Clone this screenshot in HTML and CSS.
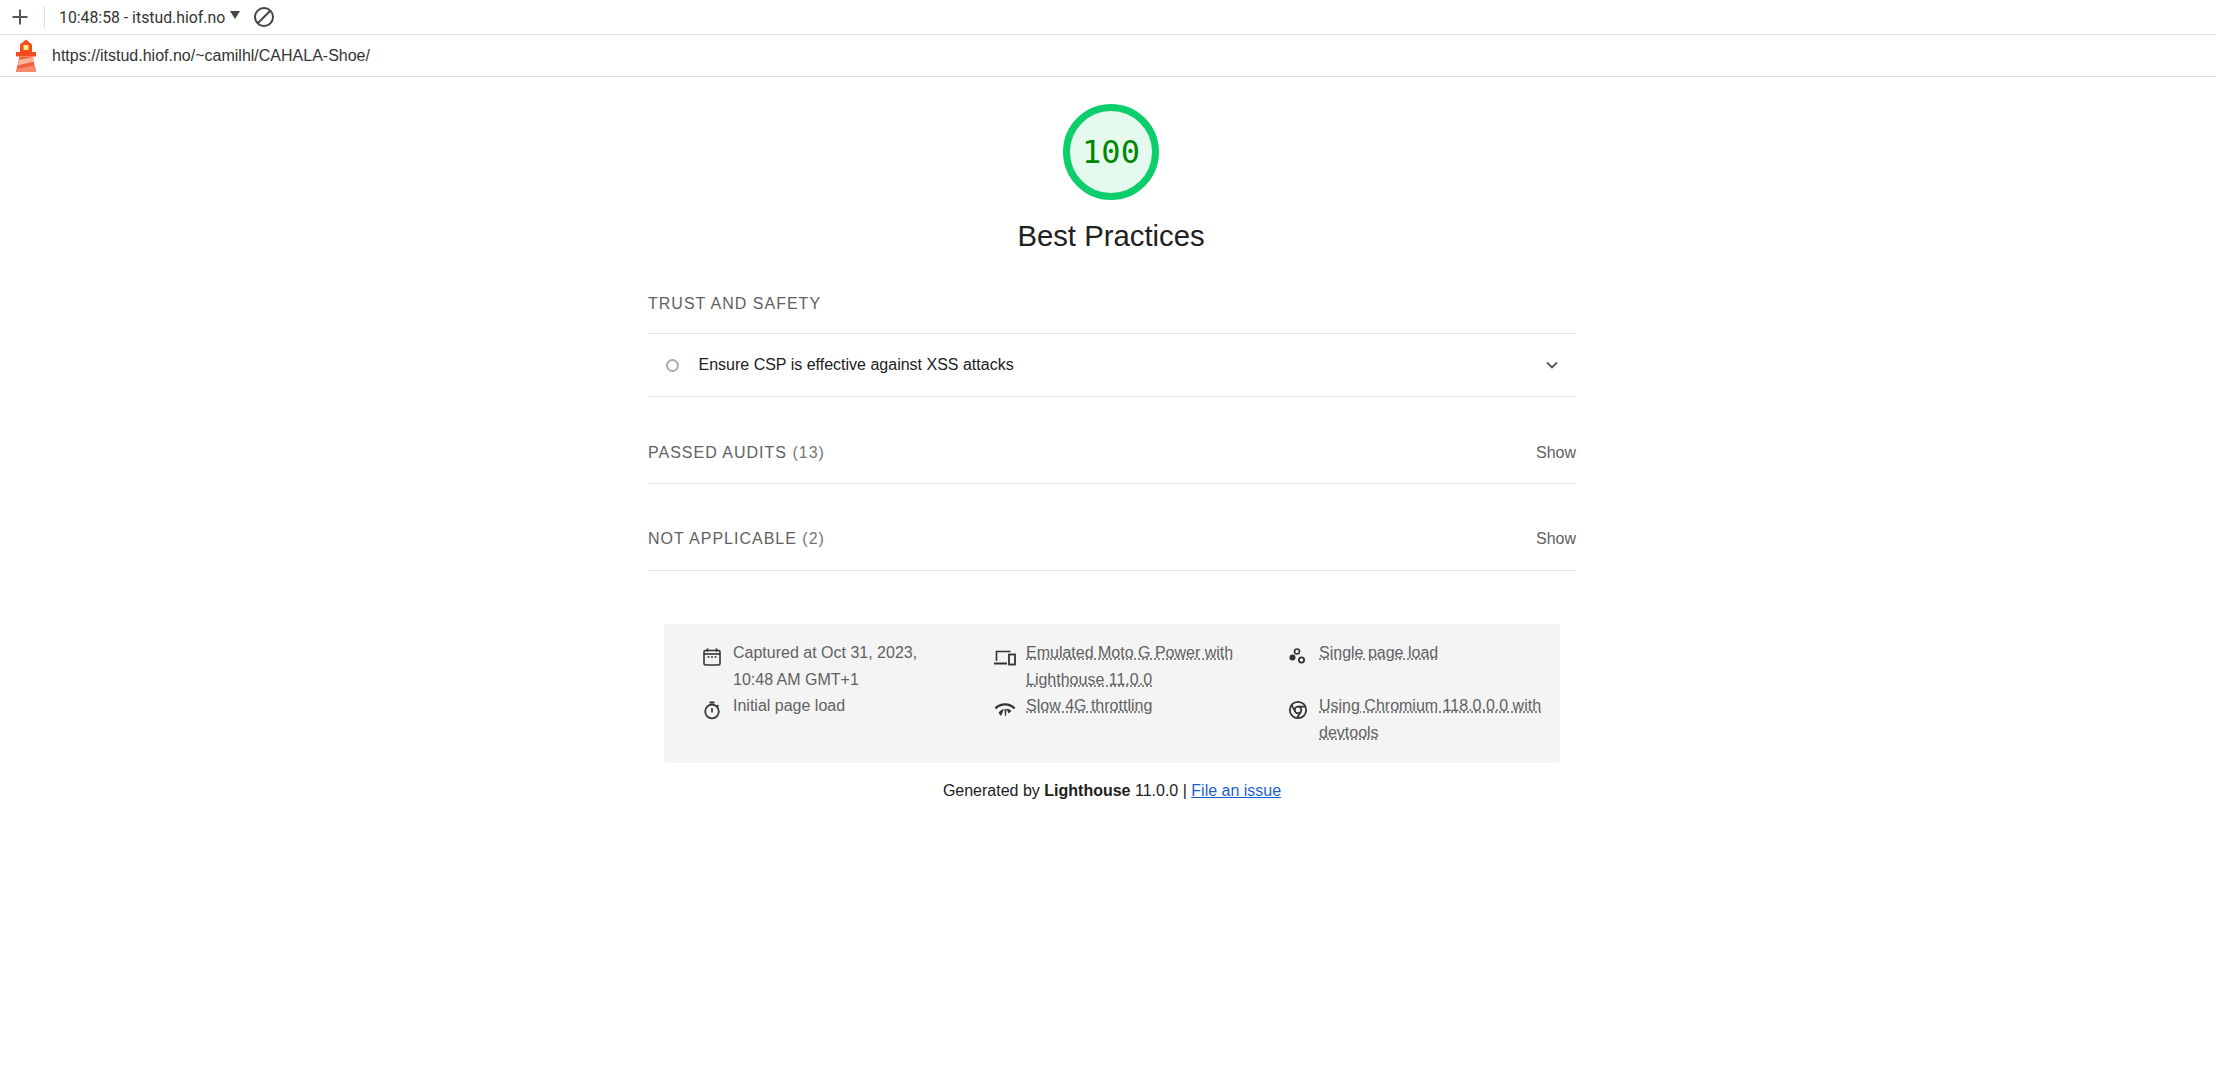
FILE: index.html
```html
<!DOCTYPE html>
<html lang="en">
<head>
  <meta charset="UTF-8">
  <title>Lighthouse report</title>
  <link rel="stylesheet" href="styles.css">
</head>
<body>
  <div class="topbar">
    <svg class="plus" width="18" height="18" viewBox="0 0 18 18"><path d="M9 1.500v15M1.500 9h15" stroke="#555" stroke-width="2" fill="none"/></svg>
    <span class="divider"></span>
    <span class="session">10:48:58 - itstud.hiof.no</span>
    <span class="caret"></span>
    <svg class="block" width="22" height="22" viewBox="0 0 22 22"><circle cx="11" cy="11" r="9" stroke="#444" stroke-width="2" fill="none"/><path d="M5 17L17 5" stroke="#444" stroke-width="2"/></svg>
  </div>
  <div class="urlbar">
    <svg class="logo" width="22" height="34" viewBox="0 0 22 34">
      <path d="M5 5.500L11 .5l6 5V13H5z" fill="#f44b21"/>
      <path d="M1 13h20v4.500H1z" fill="#f44b21"/>
      <path d="M8.500 6h5v5h-5z" fill="#fff176"/>
      <path d="M4.500 17.500h13L21 33H1z" fill="#f0603a"/>
      <path d="M3.800 21L18.300 18 19 22.500 3 26.500z" fill="#fbb39d"/>
      <path d="M1.800 30L20 26.500 21 33H1z" fill="#f88a6c"/>
    </svg>
    <span class="url">https://itstud.hiof.no/~camilhl/CAHALA-Shoe/</span>
  </div>

  <main class="report">
    <div class="gauge"><span>100</span></div>
    <h1>Best Practices</h1>

    <div class="group-title first">TRUST AND SAFETY</div>
    <div class="audit">
      <span class="dot"></span>
      <span class="audit-name">Ensure CSP is effective against XSS attacks</span>
      <svg class="chevron" width="14" height="10" viewBox="0 0 14 10"><path d="M2 2.500l5 5 5-5" stroke="#555" stroke-width="1.800" fill="none"/></svg>
    </div>

    <div class="clump">
      <span class="clump-name">PASSED AUDITS <span class="count">(13)</span></span>
      <span class="show">Show</span>
    </div>
    <div class="clump">
      <span class="clump-name">NOT APPLICABLE <span class="count">(2)</span></span>
      <span class="show">Show</span>
    </div>

    <div class="meta">
      <div class="meta-item">
        <svg width="20" height="20" viewBox="0 0 20 20"><path d="M5.500 1.500v3M14.500 1.500v3" stroke="#333" stroke-width="1.800"/><rect x="2" y="3.500" width="16" height="14.500" rx="1.500" fill="none" stroke="#333" stroke-width="1.600"/><path d="M2 7h16" stroke="#333" stroke-width="1.600"/><path d="M5.500 10h2M9 10h2M12.500 10h2" stroke="#333" stroke-width="1.400"/></svg>
        <span class="narrow">Captured at Oct 31, 2023, 10:48 AM GMT+1</span>
      </div>
      <div class="meta-item">
        <svg width="22" height="20" viewBox="0 0 22 20"><path d="M2.500 14V4.500h14" fill="none" stroke="#333" stroke-width="1.600"/><path d="M0 15.500h13v2H0z" fill="#333"/><rect x="15" y="7.500" width="6" height="10" fill="none" stroke="#333" stroke-width="1.800"/></svg>
        <span class="dotted">Emulated Moto G Power with Lighthouse 11.0.0</span>
      </div>
      <div class="meta-item">
        <svg width="20" height="20" viewBox="0 0 20 20"><circle cx="9" cy="4.500" r="2.500" fill="none" stroke="#333" stroke-width="1.600"/><circle cx="4.500" cy="10.500" r="3" fill="#333"/><circle cx="13.500" cy="13" r="2.600" fill="none" stroke="#333" stroke-width="1.800"/></svg>
        <span class="dotted">Single page load</span>
      </div>
      <div class="meta-item">
        <svg width="20" height="20" viewBox="0 0 20 20"><path d="M7.500 1.500h5v2h-5zM9.200 8h1.600v4.500H9.200z" fill="#333"/><circle cx="10" cy="11.500" r="6.800" fill="none" stroke="#333" stroke-width="1.800"/><path d="M15 5l1.500 1.500" stroke="#333" stroke-width="1.600"/></svg>
        <span>Initial page load</span>
      </div>
      <div class="meta-item">
        <svg width="22" height="20" viewBox="0 0 22 20"><path d="M1.500 8.500C6 3 16 3 20.500 8.500" fill="none" stroke="#333" stroke-width="2.400"/><path d="M4.500 13C6 10.500 8 9.500 10 9L7 16z" fill="#333"/><path d="M17.500 11C16 9.500 14 8.800 12.500 8.700L14.500 13.500z" fill="#333"/><path d="M10.500 9h2l-.5 7h-1z" fill="#333"/></svg>
        <span class="dotted">Slow 4G throttling</span>
      </div>
      <div class="meta-item">
        <svg width="20" height="20" viewBox="0 0 20 20"><circle cx="10" cy="10" r="8.200" fill="none" stroke="#333" stroke-width="1.800"/><circle cx="10" cy="10" r="3.300" fill="none" stroke="#333" stroke-width="1.700"/><path d="M10 6.700h7.500M7.200 11.700L3.500 5M12.800 11.700L9 18" stroke="#333" stroke-width="1.700" fill="none"/></svg>
        <span class="dotted">Using Chromium 118.0.0.0 with devtools</span>
      </div>
    </div>

    <p class="generated">Generated by <b>Lighthouse</b> 11.0.0 | <a href="#">File an issue</a></p>
  </main>
</body>
</html>
```

FILE: styles.css
```css
body{margin:0;background:#fff;color:#212121;font-family:"Liberation Sans",Arial,sans-serif;font-size:16px}
.topbar{height:35px;box-sizing:border-box;border-bottom:1px solid #d6dfec;display:flex;align-items:center;padding-left:11px}
.plus{flex:none}
.divider{width:1px;height:22px;background:#d6dfec;margin:0 14px 0 15px}
.session{font-family:"Roboto","Liberation Sans",sans-serif;font-size:15.800px;color:#333;white-space:nowrap}
.caret{width:0;height:0;border-left:5.500px solid transparent;border-right:5.500px solid transparent;border-top:8px solid #444;margin:0 0 4px 5px}
.block{margin-left:13px}
.urlbar{height:42px;box-sizing:border-box;border-bottom:1px solid #dcdfe4;display:flex;align-items:center;padding-left:15px}
.logo{flex:none}
.url{font-size:16px;color:#333;margin-left:15px}

.report{width:928px;margin-left:648px}
.gauge{width:96px;height:96px;box-sizing:border-box;margin:27px 0 0 415px;border:7px solid #0cce6b;border-radius:50%;background:#e5f9ef;display:flex;align-items:center;justify-content:center}
.gauge span{font-family:"DejaVu Sans Mono","Liberation Mono",monospace;font-size:32px;color:#008800}
h1{margin:18px 2px 0 0;text-align:center;font-size:29.300px;font-weight:400;line-height:36px}

.group-title,.clump-name{font-size:16px;letter-spacing:1px;color:#616161}
.group-title.first{margin-top:38px;height:41px;line-height:24px;border-bottom:1px solid #e6e6e6}
.audit{height:62px;border-bottom:1px solid #e6e6e6;display:flex;align-items:center;padding-left:18px}
.dot{width:9px;height:9px;border:2px solid #aaa;border-radius:50%;margin-top:1px}
.audit-name{margin-left:19.500px;color:#212121}
.chevron{margin-left:auto;margin-right:17px}
.clump{height:87px;box-sizing:border-box;padding-bottom:18px;border-bottom:1px solid #e6e6e6;display:flex;align-items:flex-end;justify-content:space-between;line-height:24px}
.clump+.clump{padding-bottom:19px}
.count{color:#757575}
.show{color:#616161}

.meta{margin:53px 16px 0;height:139px;box-sizing:border-box;background:#f4f4f5;border-radius:4px;padding:16px 16px 0 37px;display:grid;grid-template-columns:293px 293px 1fr;grid-auto-rows:min-content;color:#616161;line-height:26.500px}
.meta-item{display:flex;align-items:flex-start}
.meta-item svg{flex:none;width:22px;margin-top:7px;margin-right:10px}
.meta-item span{max-width:240px}
.meta-item .narrow{max-width:210px}
.dotted{text-decoration:underline dotted #616161}
.generated{margin:16px 0 0;text-align:center;line-height:24px}
.generated a{color:#1a5fd0}
```
